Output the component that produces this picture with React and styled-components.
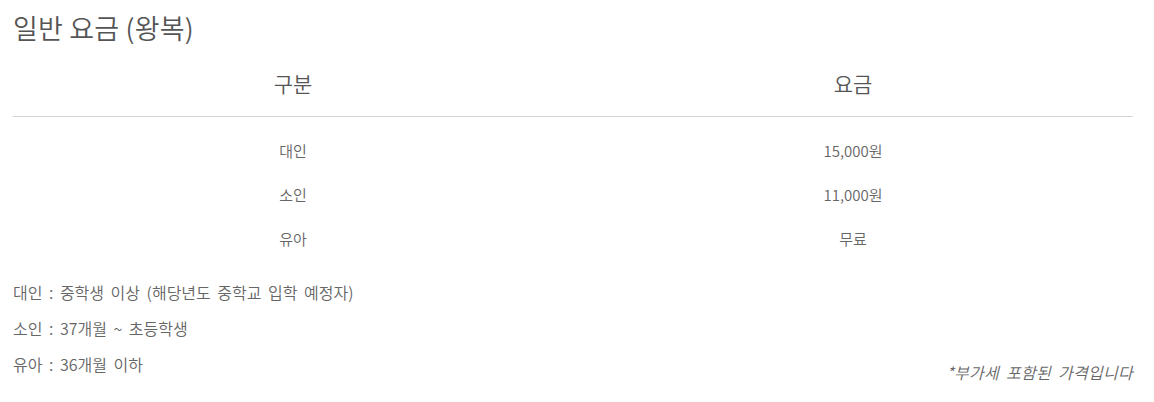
import React from 'react'
import styled, { createGlobalStyle } from 'styled-components'

const GlobalStyle = createGlobalStyle`
  body {
    margin: 0;
    background: #fff;
    font-family: "Noto Sans CJK KR", "Noto Sans", sans-serif;
    font-weight: 350;
    color: #666;
  }
`

const rows = [
  { type: '대인', price: '15,000원' },
  { type: '소인', price: '11,000원' },
  { type: '유아', price: '무료' },
]

const notes = [
  '대인 : 중학생 이상 (해당년도 중학교 입학 예정자)',
  '소인 : 37개월 ~ 초등학생',
  '유아 : 36개월 이하',
]

const App = () => {
  return (
    <>
      <GlobalStyle />
      <Wrapper>
        <Title>일반 요금 (왕복)</Title>
        <Table>
          <HeadRow>
            <HeadCell>구분</HeadCell>
            <HeadCell>요금</HeadCell>
          </HeadRow>
          <Body>
            {rows.map((r) => (
              <Row key={r.type}>
                <Cell>{r.type}</Cell>
                <Cell>{r.price}</Cell>
              </Row>
            ))}
          </Body>
        </Table>
        <Footer>
          <Notes>
            {notes.map((n) => (
              <Note key={n}>{n}</Note>
            ))}
          </Notes>
          <VatNote>*부가세 포함된 가격입니다</VatNote>
        </Footer>
      </Wrapper>
    </>
  )
}

const Wrapper = styled.div`
  padding: 10px 21px 0 13px;
`

const Title = styled.h2`
  margin: 0;
  font-size: 27px;
  font-weight: 350;
  line-height: 36px;
  color: #555;
  letter-spacing: 0.2px;
`

const Table = styled.div`
  display: flex;
  flex-direction: column;
`

const HeadRow = styled.div`
  display: grid;
  grid-template-columns: 1fr 1fr;
  padding: 23px 0 18px;
  border-bottom: 1px solid #d5d5d5;
`

const HeadCell = styled.div`
  text-align: center;
  font-size: 21px;
  line-height: 29px;
  color: #555;
`

const Body = styled.div`
  padding-top: 12px;
`

const Row = styled.div`
  display: grid;
  grid-template-columns: 1fr 1fr;
  padding: 12px 0;
`

const Cell = styled.div`
  text-align: center;
  font-size: 15px;
  line-height: 20px;
  color: #666;
`

const Footer = styled.div`
  display: flex;
  justify-content: space-between;
  align-items: flex-end;
  margin-top: 13px;
`

const Notes = styled.div`
  display: flex;
  flex-direction: column;
`

const Note = styled.div`
  font-size: 16px;
  line-height: 36px;
  color: #666;
  word-spacing: 3px;
`

const VatNote = styled.div`
  font-size: 16px;
  line-height: 20px;
  font-style: italic;
  color: #666;
  word-spacing: 3px;
  letter-spacing: 0.3px;
`

export default App
